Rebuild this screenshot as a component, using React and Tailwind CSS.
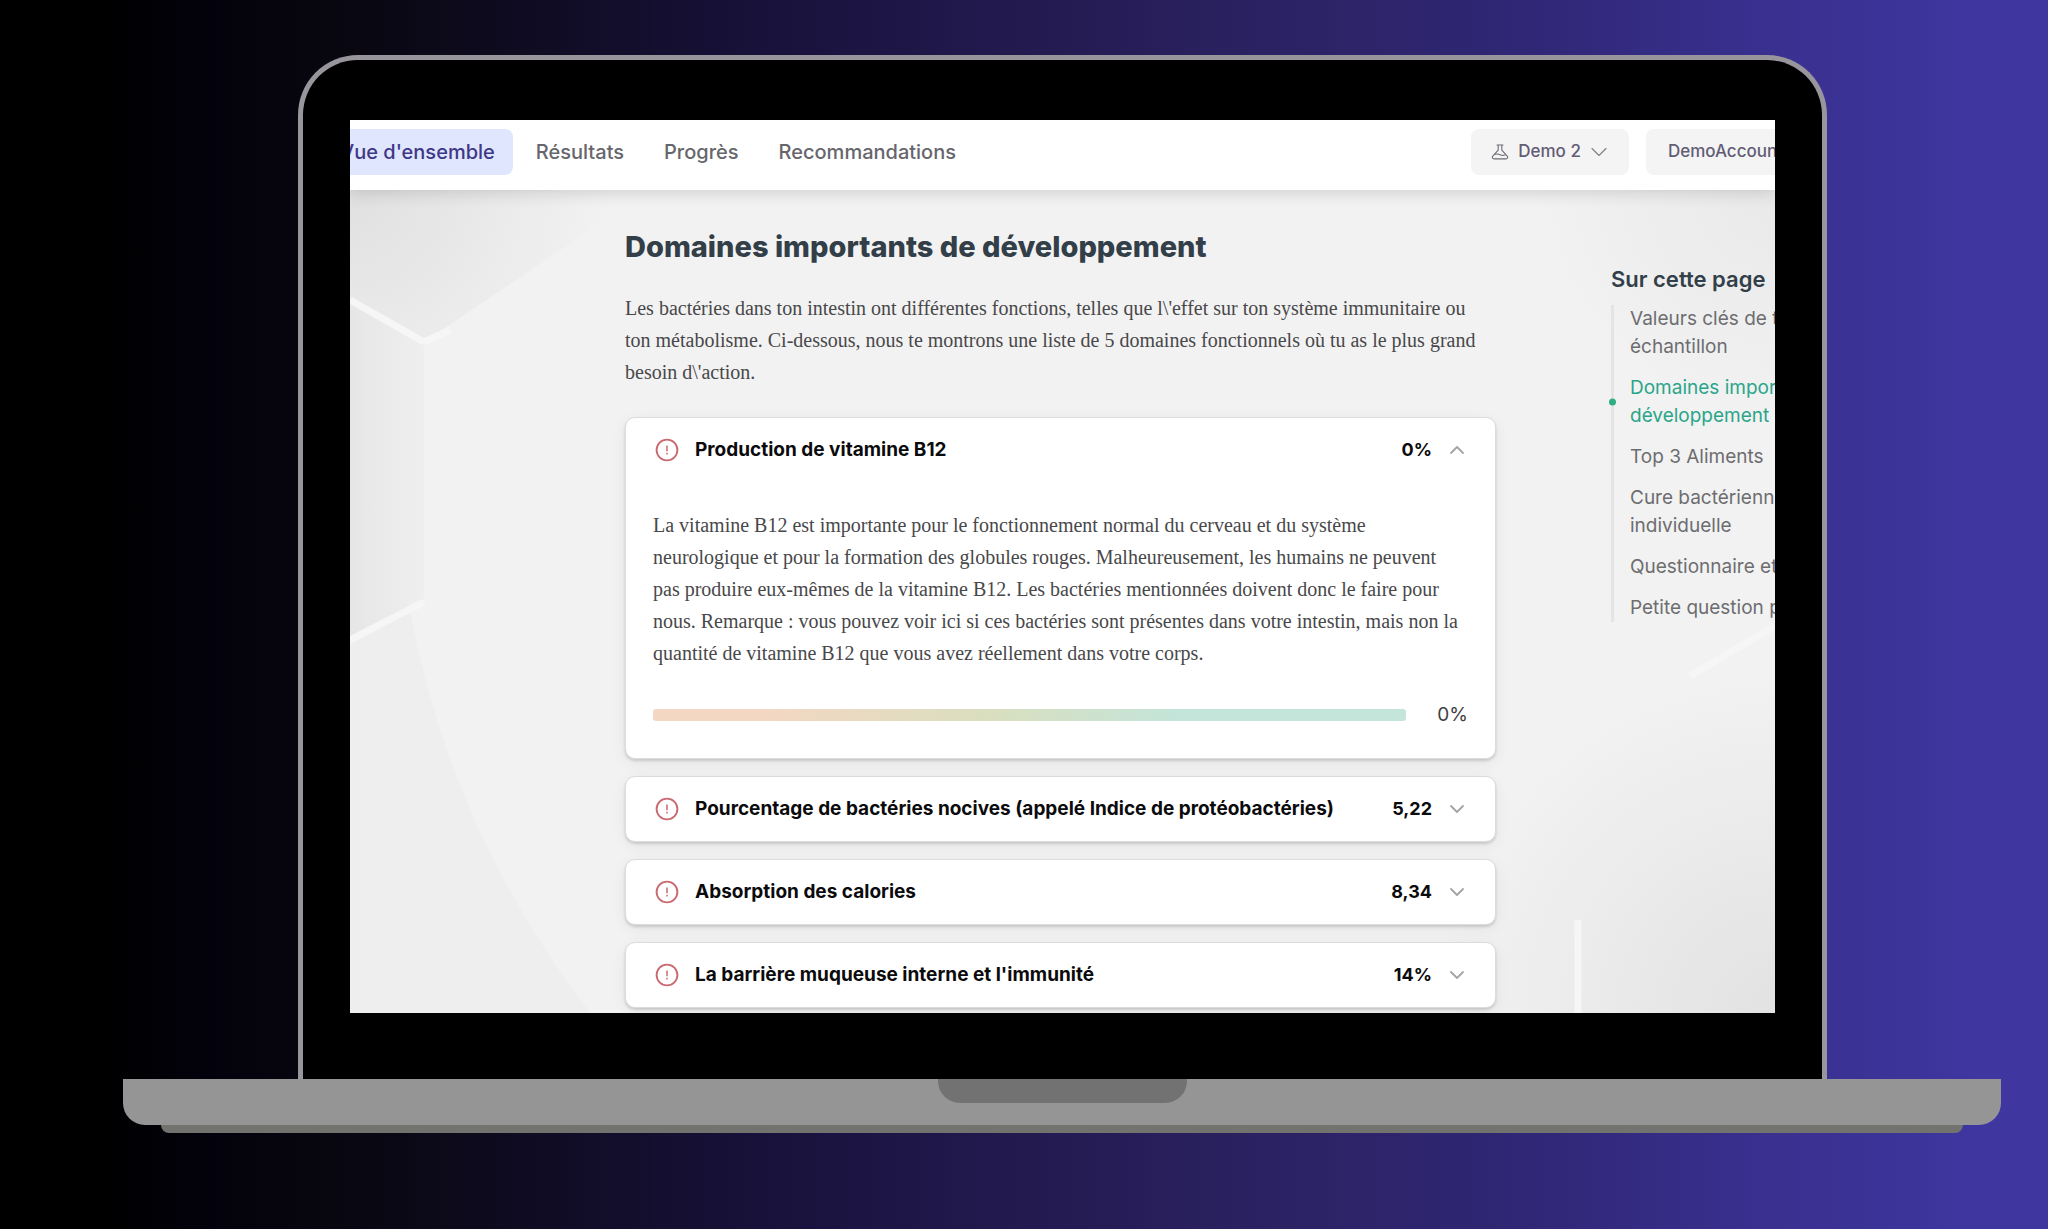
import { useState } from 'react'
import { ChevronDown, ChevronUp } from 'lucide-react'

const tabs = ["Vue d'ensemble", 'Résultats', 'Progrès', 'Recommandations']

const domains = [
  {
    id: 'b12',
    title: 'Production de vitamine B12',
    value: '0%',
    lines: [
      'La vitamine B12 est importante pour le fonctionnement normal du cerveau et du système',
      'neurologique et pour la formation des globules rouges. Malheureusement, les humains ne peuvent',
      'pas produire eux-mêmes de la vitamine B12. Les bactéries mentionnées doivent donc le faire pour',
      'nous. Remarque : vous pouvez voir ici si ces bactéries sont présentes dans votre intestin, mais non la',
      'quantité de vitamine B12 que vous avez réellement dans votre corps.',
    ],
  },
  { id: 'proteo', title: 'Pourcentage de bactéries nocives (appelé Indice de protéobactéries)', value: '5,22' },
  { id: 'calories', title: 'Absorption des calories', value: '8,34' },
  { id: 'barriere', title: "La barrière muqueuse interne et l'immunité", value: '14%' },
]

const intro = [
  "Les bactéries dans ton intestin ont différentes fonctions, telles que l\\'effet sur ton système immunitaire ou",
  'ton métabolisme. Ci-dessous, nous te montrons une liste de 5 domaines fonctionnels où tu as le plus grand',
  "besoin d\\'action.",
]

const sections = [
  ['Valeurs clés de ton', 'échantillon'],
  ['Domaines importants de', 'développement'],
  ['Top 3 Aliments'],
  ['Cure bactérienne', 'individuelle'],
  ['Questionnaire et'],
  ['Petite question pour'],
]

function AlertIcon() {
  return (
    <svg viewBox="0 0 24 24" className="size-6 shrink-0" fill="none" stroke="#c96a72" aria-hidden="true">
      <circle cx="12" cy="12" r="10.4" strokeWidth="1.9" />
      <path d="M12 7.500v5.700M12 14.800v1.600" strokeWidth="1.500" />
    </svg>
  )
}

function FlaskIcon() {
  return (
    <svg viewBox="0 0 18 18" className="size-[18px]" fill="none" stroke="#6b6b73" strokeWidth="1.1" strokeLinejoin="round" strokeLinecap="round" aria-hidden="true">
      <path d="M6 2h6M7.200 2v5.200L2 12.800c-1.300 1.500-.7 3 1.300 3.100h11.400c2-.1 2.600-1.600 1.300-3.100l-5.200-5.600V2" />
      <path d="M4.300 11.300c1.900-.6 3.200-.3 4.700.4 1.500.7 3 1 4.900.3" />
    </svg>
  )
}

function Lines({ lines }) {
  return lines.map((line) => (
    <span key={line} className="block whitespace-nowrap">{line}</span>
  ))
}

function DomainCard({ domain, open, onToggle }) {
  const Chevron = open ? ChevronUp : ChevronDown
  return (
    <li className="rounded-[10px] border border-[#dcdcdc] bg-white shadow-[0_2px_3px_rgba(0,0,0,0.14),0_4px_16px_rgba(0,0,0,0.06)]">
      <button
        type="button"
        aria-expanded={open}
        onClick={onToggle}
        className="flex h-16 w-full items-center pr-[26px] pl-[29px] text-left font-['Inter',sans-serif] font-bold text-[#0b0b0d]"
      >
        <AlertIcon />
        <span className="ml-4 flex-1 text-[19px] whitespace-nowrap">{domain.title}</span>
        <span className="text-lg">{domain.value}</span>
        <Chevron className="ml-[13px] size-6 shrink-0 text-[#a3a3a8]" strokeWidth={1.8} />
      </button>
      {open && domain.lines && (
        <div className="p-[27px]">
          <p className="font-['Liberation_Serif',serif] text-xl leading-8 text-[#48484a]">
            <Lines lines={domain.lines} />
          </p>
          <div className="mt-[30px] flex h-8 items-center gap-[31px] font-['Inter',sans-serif] text-[19px] text-[#3f3f42]">
            <div className="h-3 flex-1 rounded-[3px] bg-linear-to-r from-[#f3d7c2] from-15% via-[#d9dfbf] via-45% to-[#c3e5da] to-70%" />
            <span>0%</span>
          </div>
        </div>
      )}
    </li>
  )
}

function TopNav() {
  return (
    <header className="flex justify-between overflow-hidden bg-white pt-[9px] pb-[15px] font-['Inter',sans-serif] font-medium shadow-[0_2px_16px_rgba(0,0,0,0.16)]">
      <nav className="-ml-7 flex">
        {tabs.map((tab, i) => (
          <a
            key={tab}
            href="#"
            className={
              i === 0
                ? 'mr-[3px] flex h-[46px] items-center rounded-lg bg-[#e0e6fd] px-[18px] text-xl whitespace-nowrap text-[#3f3787]'
                : 'flex h-[46px] items-center px-5 text-xl whitespace-nowrap text-[#66666c]'
            }
          >
            {tab}
          </a>
        ))}
      </nav>
      <div className="-mr-[30px] flex gap-[17px] text-[17px] text-[#625c74]">
        <button type="button" className="flex h-[46px] items-center rounded-lg bg-[#f4f4f5] pr-4 pl-5">
          <FlaskIcon />
          <span className="ml-[9px]">Demo 2</span>
          <ChevronDown className="ml-1 size-7 text-[#85818f]" strokeWidth={1} />
        </button>
        <button type="button" className="flex h-[46px] items-center rounded-lg bg-[#f4f4f5] px-[22px]">
          DemoAccount
        </button>
      </div>
    </header>
  )
}

function Backdrop() {
  return (
    <svg viewBox="0 0 1425 823" preserveAspectRatio="none" className="absolute inset-0 size-full" fill="none" aria-hidden="true">
      <defs>
        <radialGradient id="tl" gradientUnits="userSpaceOnUse" cx="0" cy="0" r="260">
          <stop offset="0" stopColor="#e0e0e0" />
          <stop offset="1" stopColor="#f2f2f2" />
        </radialGradient>
        <linearGradient id="left" x1="0" x2="1">
          <stop offset="0" stopColor="#e6e6e6" />
          <stop offset="1" stopColor="#efefef" />
        </linearGradient>
        <radialGradient id="tr" gradientUnits="userSpaceOnUse" cx="1425" cy="0" r="240">
          <stop offset="0" stopColor="#e9e9e9" />
          <stop offset="1" stopColor="#f2f2f2" />
        </radialGradient>
        <radialGradient id="br" gradientUnits="userSpaceOnUse" cx="1425" cy="823" r="340">
          <stop offset="0" stopColor="#e2e2e2" />
          <stop offset="1" stopColor="#f2f2f2" />
        </radialGradient>
      </defs>
      <path d="M0 0h300L74 152 0 112z" fill="url(#tl)" />
      <path d="M1125 0h300v300z" fill="url(#tr)" />
      <path d="M0 112L74 152V410L0 450z" fill="url(#left)" />
      <path d="M0 455L60 420Q100 640 240 823H0z" fill="#eeeeee" />
      <path d="M1425 436L1050 650V823H1425z" fill="url(#br)" />
      <path d="M0 110L74 152M74 152L100 140M0 450L74 412M1228 823V730M1425 436L1340 486" stroke="#f6f6f6" strokeWidth="7" />
    </svg>
  )
}

function PageIndex() {
  return (
    <aside className="w-56 shrink-0 pt-[38px] font-['Inter',sans-serif]">
      <h2 className="text-[22px] leading-7 font-semibold text-[#323f49]">Sur cette page</h2>
      <ul className="mt-3 flex flex-col gap-[13px] border-l-3 border-[#e4e4e4] pl-4 text-[19px] leading-7 text-[#6d6d70]">
        {sections.map((lines, i) => (
          <li key={lines[0]} className="relative">
            {i === 1 && <span className="absolute top-1/2 -left-[21px] size-[7px] -translate-y-1/2 rounded-full bg-[#2fae84]" />}
            <a href="#" className={i === 1 ? 'text-[#2aa58a]' : ''}>
              <Lines lines={lines} />
            </a>
          </li>
        ))}
      </ul>
    </aside>
  )
}

function Screen() {
  const [openId, setOpenId] = useState('b12')
  return (
    <div className="overflow-hidden bg-[#f2f2f2]">
      <div className="relative z-10">
        <TopNav />
      </div>
      <div className="relative">
        <Backdrop />
        <div className="relative -mr-[60px] flex pt-[37px] pb-[5px] pl-[275px]">
          <main className="min-w-0 flex-1">
            <h1 className="font-['Inter',sans-serif] text-[29px] leading-10 font-extrabold text-[#323f49]">
              Domaines importants de développement
            </h1>
            <p className="mt-[25px] font-['Liberation_Serif',serif] text-xl leading-8 text-[#48484a]">
              <Lines lines={intro} />
            </p>
            <ul className="mt-[29px] flex flex-col gap-[17px]">
              {domains.map((d) => (
                <DomainCard
                  key={d.id}
                  domain={d}
                  open={openId === d.id}
                  onToggle={() => setOpenId(openId === d.id ? null : d.id)}
                />
              ))}
            </ul>
          </main>
          <div className="w-[115px] shrink-0" />
          <PageIndex />
        </div>
      </div>
    </div>
  )
}

export default function App() {
  return (
    <div className="min-h-screen overflow-hidden bg-[linear-gradient(90deg,#000_0%,#000_5%,#03020c_10%,#08060f_16%,#0f0b20_25%,#18113a_37%,#231a50_50%,#2b2263_62%,#302777_75%,#382f8d_85%,#3f36a0_97%)] pt-[55px] pr-[47px] pb-24 pl-[123px]">
      <div className="mr-[174px] ml-[175px] rounded-t-[60px] border-5 border-b-0 border-[#98969c] bg-black px-[47px] pt-[60px] pb-[66px]">
        <Screen />
      </div>
      <div className="flex h-[46px] justify-center rounded-b-[22px] bg-[#959595]">
        <div className="h-6 w-[249px] rounded-b-[22px] bg-[#727272]" />
      </div>
      <div className="mx-[38px] h-2 rounded-b-lg bg-[#72726f]" />
    </div>
  )
}
